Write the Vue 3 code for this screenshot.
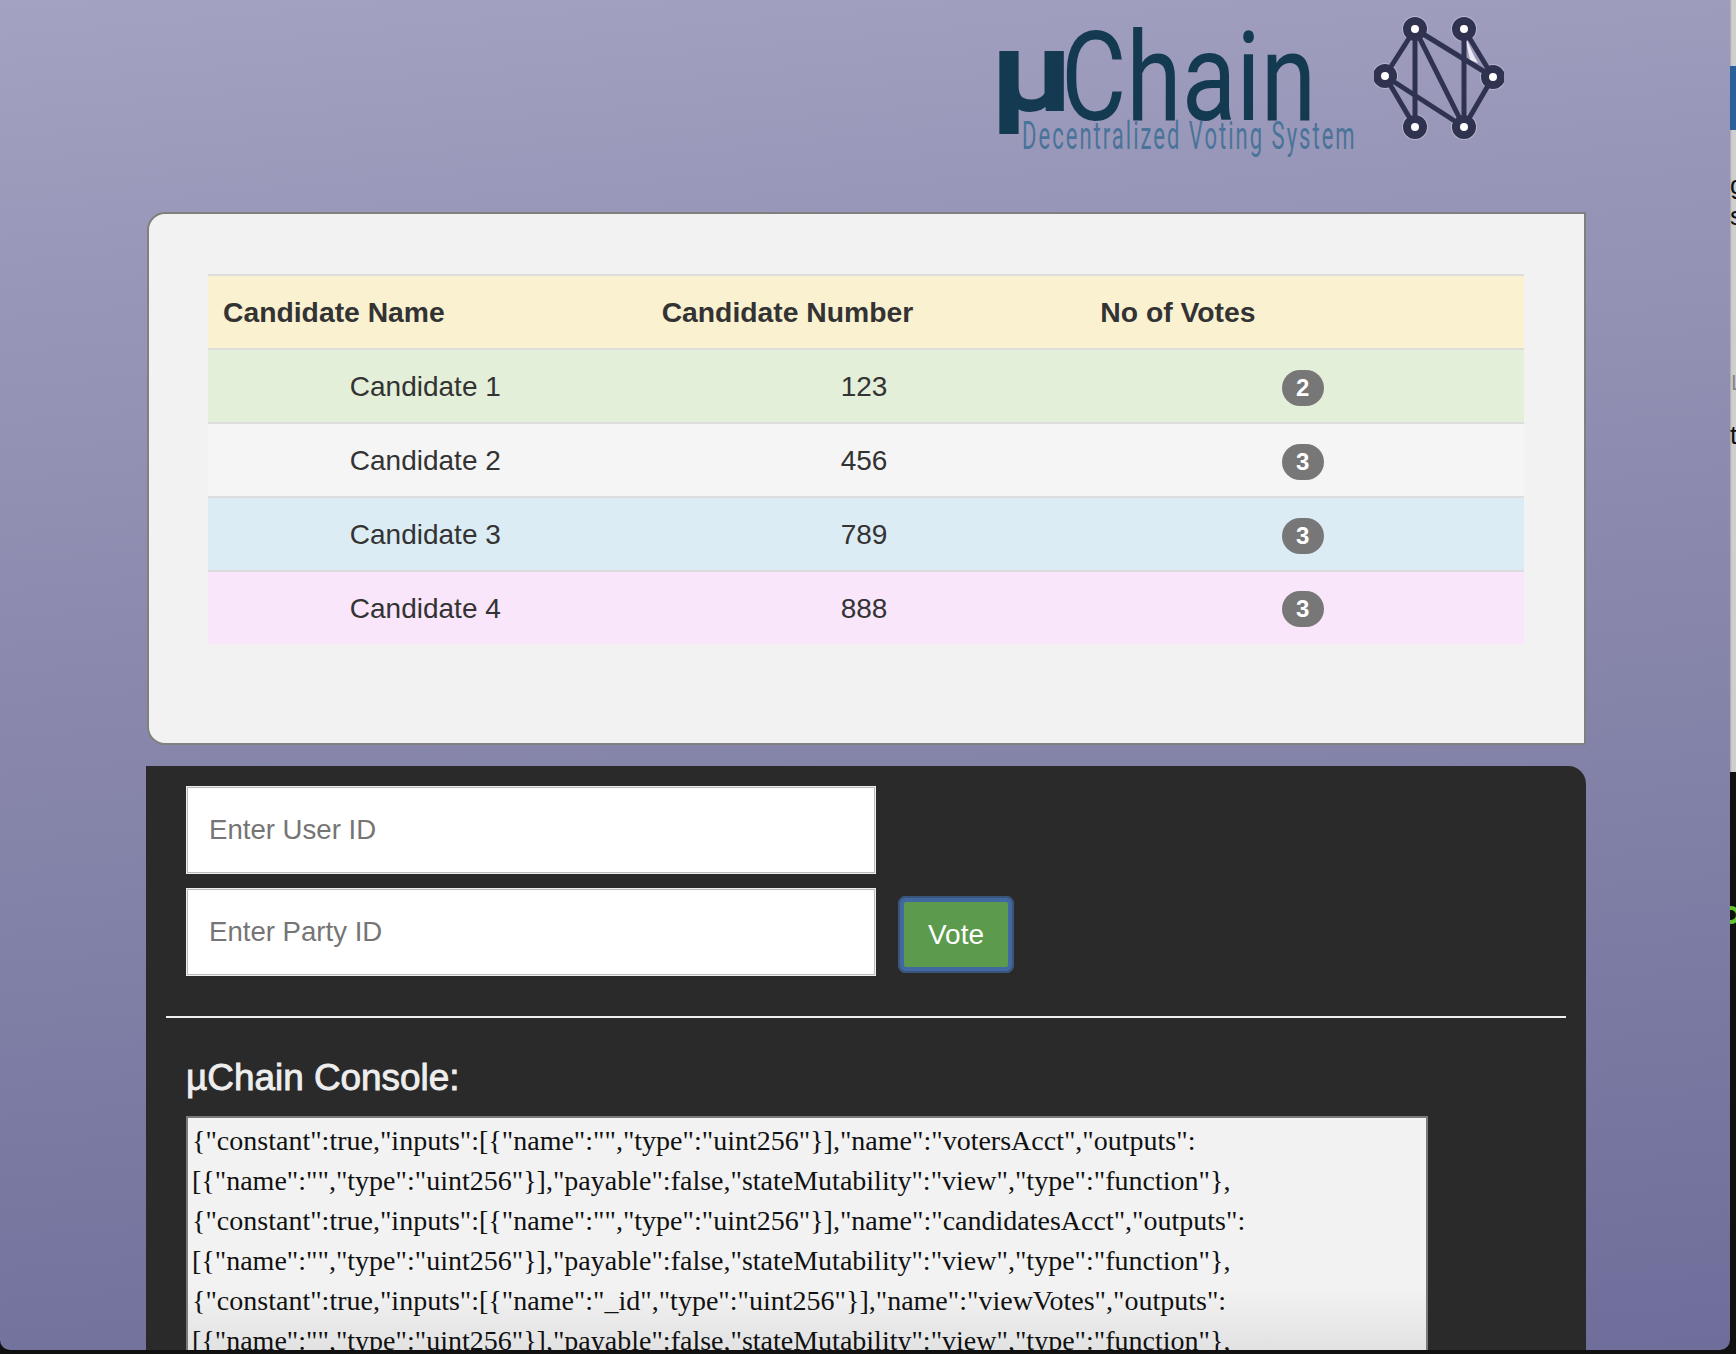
<script setup>
const rows = [
  { name: 'Candidate 1', number: '123', votes: 2, tone: 'green' },
  { name: 'Candidate 2', number: '456', votes: 3, tone: 'grey' },
  { name: 'Candidate 3', number: '789', votes: 3, tone: 'blue' },
  { name: 'Candidate 4', number: '888', votes: 3, tone: 'pink' },
]
const nodes = [[41, 19], [90, 19], [11, 66], [119, 67], [41, 117], [90, 117]]
const edges = [[0, 2], [2, 4], [2, 5], [0, 4], [0, 5], [0, 3], [1, 5], [1, 3], [3, 5]]
const abi = [
  '{"constant":true,"inputs":[{"name":"","type":"uint256"}],"name":"votersAcct","outputs":',
  '[{"name":"","type":"uint256"}],"payable":false,"stateMutability":"view","type":"function"},',
  '{"constant":true,"inputs":[{"name":"","type":"uint256"}],"name":"candidatesAcct","outputs":',
  '[{"name":"","type":"uint256"}],"payable":false,"stateMutability":"view","type":"function"},',
  '{"constant":true,"inputs":[{"name":"_id","type":"uint256"}],"name":"viewVotes","outputs":',
  '[{"name":"","type":"uint256"}],"payable":false,"stateMutability":"view","type":"function"},',
].join('\n')
</script>

<template>
  <div class="screen">
    <div class="window">
      <header class="header">
        <div class="logo">
          <span class="mu">µ</span>
          <span class="chain">Chain</span>
          <span class="tagline">Decentralized Voting System</span>
        </div>
        <svg class="mark" viewBox="0 0 130 136" width="130" height="136">
          <g class="halo">
            <circle v-for="(n, i) in nodes" :key="i" :cx="n[0]" :cy="n[1]" r="13" />
          </g>
          <path d="M91 26 L100 46 L104 53 L96 50 Z" fill="#ecebf4" />
          <line
            v-for="(e, i) in edges"
            :key="i"
            class="edge"
            :x1="nodes[e[0]][0]"
            :y1="nodes[e[0]][1]"
            :x2="nodes[e[1]][0]"
            :y2="nodes[e[1]][1]"
          />
          <circle v-for="(n, i) in nodes" :key="i" class="node" :cx="n[0]" :cy="n[1]" r="8" />
        </svg>
      </header>

      <section class="results">
        <table class="votes">
          <thead>
            <tr>
              <th>Candidate Name</th>
              <th>Candidate Number</th>
              <th>No of Votes</th>
            </tr>
          </thead>
          <tbody>
            <tr v-for="row in rows" :key="row.number" :class="row.tone">
              <td>{{ row.name }}</td>
              <td>{{ row.number }}</td>
              <td><span class="badge">{{ row.votes }}</span></td>
            </tr>
          </tbody>
        </table>
      </section>

      <section class="dark">
        <form class="ballot" @submit.prevent>
          <div class="fields">
            <input class="field" type="text" placeholder="Enter User ID" />
            <input class="field" type="text" placeholder="Enter Party ID" />
          </div>
          <button class="vote" type="submit">Vote</button>
        </form>
        <hr class="rule" />
        <h3 class="console-title">µChain Console:</h3>
        <textarea class="console" readonly :value="abi" wrap="off"></textarea>
      </section>
    </div>
    <div class="edge-strip">
      <span class="strip-blue"></span>
      <span class="frag frag-g">g</span>
      <span class="frag frag-s">s</span>
      <span class="frag frag-l">L</span>
      <span class="frag frag-t">t</span>
      <span class="strip-dark"><span class="strip-ring"></span></span>
    </div>
  </div>
</template>

<style>
html, body { margin: 0; background: #000; }
</style>

<style scoped>
.screen {
  width: 1736px;
  height: 1354px;
  background: #111;
  position: relative;
  overflow: hidden;
  font-family: "Liberation Sans", Arial, sans-serif;
  color: #333;
}
.window {
  width: 1730px;
  height: 1350px;
  box-sizing: border-box;
  padding: 0 144px 0 146px;
  overflow: hidden;
  border-radius: 0 0 10px 10px;
  background: linear-gradient(175deg, #a3a2c2 0%, #9896b8 20%, #8584a9 55%, #6f6e9b 100%);
}
.header {
  height: 212px;
  box-sizing: border-box;
  display: flex;
  justify-content: flex-end;
  padding: 10px 82px 0 0;
  gap: 15px;
}
.logo {
  position: relative;
  width: 358px;
  height: 160px;
}
.mu, .chain, .tagline {
  position: absolute;
  transform-origin: left top;
  white-space: nowrap;
  line-height: 1;
}
.mu {
  left: -11px;
  top: 5px;
  font: 700 114px/1 Roboto, sans-serif;
  color: #133a50;
  transform: scaleX(1.2);
}
.chain {
  left: 60px;
  top: 6px;
  font: 400 124px/1 Roboto, sans-serif;
  color: #133a50;
  transform: scaleX(0.81);
}
.tagline {
  left: 21px;
  top: 107px;
  font: 400 38px/1 Roboto, sans-serif;
  letter-spacing: 3.45px;
  color: #4a7399;
  transform: scaleX(0.58);
}
.mark { flex: none; }
.halo circle { fill: #d9d8e6; opacity: 0.45; }
.edge { stroke: #2f3350; stroke-width: 5; }
.node { fill: #fff; stroke: #2f3350; stroke-width: 8; }
.results {
  box-sizing: border-box;
  width: 1439px;
  height: 533px;
  margin-left: 1px;
  padding: 60px 60px 0 59px;
  background: #f2f2f2;
  border: 2px solid #808080;
  border-radius: 18px 0 0 18px;
}
.votes {
  width: 1316px;
  table-layout: fixed;
  border-collapse: collapse;
  font-size: 28px;
}
.votes th, .votes td {
  box-sizing: border-box;
  height: 74px;
  padding: 2px 0 0;
  border-top: 2px solid #ddd;
  vertical-align: middle;
}
.votes th {
  padding: 0 0 0 15px;
  text-align: left;
  font-size: 28.3px;
  font-weight: 700;
  background: #f9f1d0;
}
.votes td {
  padding-right: 4px;
  text-align: center;
}
.votes .pink td {
  height: 73px;
  padding-top: 1px;
}
.green td { background: #e3efd9; }
.grey td { background: #f5f5f5; }
.blue td { background: #dcecf5; }
.pink td { background: #f9e6fb; }
.badge {
  display: inline-block;
  min-width: 42px;
  height: 36px;
  margin-top: 1px;
  border-radius: 18px;
  background: #777;
  color: #fff;
  font-size: 24px;
  font-weight: 700;
  line-height: 36px;
  vertical-align: middle;
}
.dark {
  box-sizing: border-box;
  width: 1440px;
  height: 584px;
  margin-top: 21px;
  padding: 20px 20px 0;
  background: #2a2a2a;
  border-top-right-radius: 18px;
}
.ballot {
  display: flex;
  align-items: flex-end;
  gap: 22px;
  padding: 0 0 40px 20px;
}
.fields {
  display: flex;
  flex-direction: column;
  gap: 14px;
}
.field {
  box-sizing: border-box;
  width: 690px;
  height: 88px;
  padding: 0 21px;
  background: #fff;
  border: 2px solid #bbb;
  outline: 1px solid #eee;
  outline-offset: -1px;
  border-radius: 0;
  font: 27.6px "Liberation Sans", Arial, sans-serif;
  color: #333;
}
.field::placeholder { color: #757575; opacity: 1; }
.vote {
  box-sizing: border-box;
  width: 116px;
  height: 77px;
  margin-bottom: 3px;
  padding: 0;
  border: 6px solid #41689f;
  outline: 2px solid #39557c;
  outline-offset: -2px;
  border-radius: 8px;
  background: #5c9a4e;
  color: #fff;
  font: 28px "Liberation Sans", Arial, sans-serif;
}
.rule {
  margin: 0;
  height: 2px;
  border: 0;
  background: #eee;
}
.console-title {
  margin: 40px 0 18px 20px;
  font-size: 36.9px;
  line-height: 40px;
  font-weight: 400;
  -webkit-text-stroke: 0.9px #eee;
  color: #eee;
}
.console {
  display: block;
  box-sizing: border-box;
  width: 1242px;
  height: 260px;
  margin-left: 20px;
  padding: 3px 4px;
  border: 2px solid #7a7a7a;
  border-radius: 0;
  background: linear-gradient(#f2f2f2 0, #f2f2f2 170px, #e2e2e2 232px);
  color: #111;
  font: 28px/40px "Liberation Serif", "Times New Roman", serif;
  overflow: hidden;
  resize: none;
  white-space: pre;
}
.edge-strip {
  position: absolute;
  top: 0;
  right: 0;
  width: 6px;
  height: 1342px;
  overflow: hidden;
  background: linear-gradient(90deg, #a8a8a8 0, #cfcfcf 2px);
  color: #111;
}
.strip-blue {
  position: absolute;
  top: 66px;
  left: 0;
  width: 6px;
  height: 64px;
  background: #2a619b;
}
.frag {
  position: absolute;
  left: 0;
  font: 26px/30px "Liberation Sans", Arial, sans-serif;
}
.frag-g { top: 170px; }
.frag-s { top: 201px; }
.frag-l { top: 368px; left: 1px; color: #888; font-size: 22px; }
.frag-t { top: 420px; }
.strip-dark {
  position: absolute;
  top: 772px;
  left: 0;
  width: 6px;
  bottom: 0;
  background: #111;
}
.strip-ring {
  position: absolute;
  top: 134px;
  left: -8px;
  width: 10px;
  height: 10px;
  border: 4px solid #63c42f;
  border-radius: 50%;
}
</style>
